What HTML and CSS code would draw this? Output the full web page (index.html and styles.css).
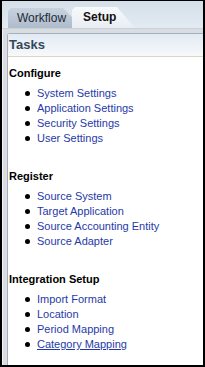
FILE: index.html
```html
<!DOCTYPE html>
<html>

<head>
  <title>Tasks</title>
  <link rel="stylesheet" href="styles.css">
</head>

<body>
  <div class="frame">
    <div class="tab-bar">
      <div class="tab tab-workflow">Workflow</div>
      <div class="tab tab-setup">Setup</div>
    </div>

    <div class="tab-body">
      <div class="panel">
        <div class="panel-header">Tasks</div>
        <div class="panel-content">
          <h3>Configure</h3>
          <ul class="task-list">
            <li><a href="#">System Settings</a></li>
            <li><a href="#">Application Settings</a></li>
            <li><a href="#">Security Settings</a></li>
            <li><a href="#">User Settings</a></li>
          </ul>

          <h3>Register</h3>
          <ul class="task-list">
            <li><a href="#">Source System</a></li>
            <li><a href="#">Target Application</a></li>
            <li><a href="#">Source Accounting Entity</a></li>
            <li><a href="#">Source Adapter</a></li>
          </ul>

          <h3>Integration Setup</h3>
          <ul class="task-list">
            <li><a href="#">Import Format</a></li>
            <li><a href="#">Location</a></li>
            <li><a href="#">Period Mapping</a></li>
            <li><a href="#" class="hovered">Category Mapping</a></li>
          </ul>
        </div>
      </div>
    </div>
  </div>
</body>

</html>
```

FILE: styles.css
```css
:root {
  --link-blue: #1f3aa8;
  --panel-line: #a7b0ba;
  --tab-dark: #b7c3d1;
  --tab-light: #eef2f6;
}

html, body {
  margin: 0;
  padding: 0;
  background-color: #000;
}

.frame {
  box-sizing: border-box;
  width: 205px;
  height: 367px;
  border: 2px solid #000;
  border-top-width: 1px;
  background-color: #fff;
  font-family: "Liberation Sans", Arial, sans-serif;
  font-size: 11px;
  display: flex;
  flex-direction: column;
  overflow: hidden;
}

/* Tabs */
.tab-bar {
  height: 27px;
  flex: none;
  display: flex;
  align-items: flex-end;
  padding-left: 6px;
  background: linear-gradient(#d3dfe9, #e3ebf2);
  border-bottom: 1px solid #c9d1d9;
}

.tab {
  height: 20px;
  line-height: 21px;
  color: #1e2a38;
  font-size: 12px;
}

.tab-workflow {
  width: 55px;
  padding-left: 9px;
  background: linear-gradient(#c9d3df, #aebbca);
  clip-path: polygon(0 3px, 3px 0, calc(100% - 9px) 0, 100% 9px, 100% 100%, 0 100%);
}

.tab-setup {
  width: 52px;
  height: 21px;
  padding-left: 11px;
  font-weight: bold;
  color: #111;
  background: linear-gradient(#f7f9fb, #e8eef4);
  clip-path: polygon(0 3px, 3px 0, calc(100% - 18px) 0, 100% 100%, 0 100%);
}

/* Tab body */
.tab-body {
  flex: 1;
  display: flex;
  padding: 4px 0 0 5px;
  background: linear-gradient(90deg, #f2f4f6 0, #f2f4f6 1px, #d9dde2 1px);
}

.panel {
  flex: 1;
  background-color: #fff;
  border-left: 1px solid var(--panel-line);
  border-top: 1px solid var(--panel-line);
  border-top-left-radius: 3px;
}

.panel-header {
  height: 22px;
  line-height: 22px;
  padding-left: 1px;
  font-size: 13px;
  font-weight: bold;
  color: #34485c;
  background: linear-gradient(#e2eaf3, #f7f9fb);
  border-bottom: 1px solid #ddd5c2;
}

.panel-content {
  padding: 9px 0 0 1px;
}

.panel-content h3 {
  margin: 0 0 5px 0;
  font-size: 11px;
  line-height: 15px;
  color: #000;
}

.task-list {
  margin: 0 0 23px 0;
  padding-left: 16px;
  list-style: none;
  line-height: 15px;
}

.task-list li {
  display: flex;
  align-items: center;
}

/* bigger round bullets than the default disc */
.task-list li::before {
  content: "";
  width: 5px;
  height: 5px;
  margin-right: 7px;
  border-radius: 50%;
  background-color: #000;
}

.task-list a {
  color: var(--link-blue);
  text-decoration: none;
}

.task-list a.hovered {
  text-decoration: underline;
}
```
